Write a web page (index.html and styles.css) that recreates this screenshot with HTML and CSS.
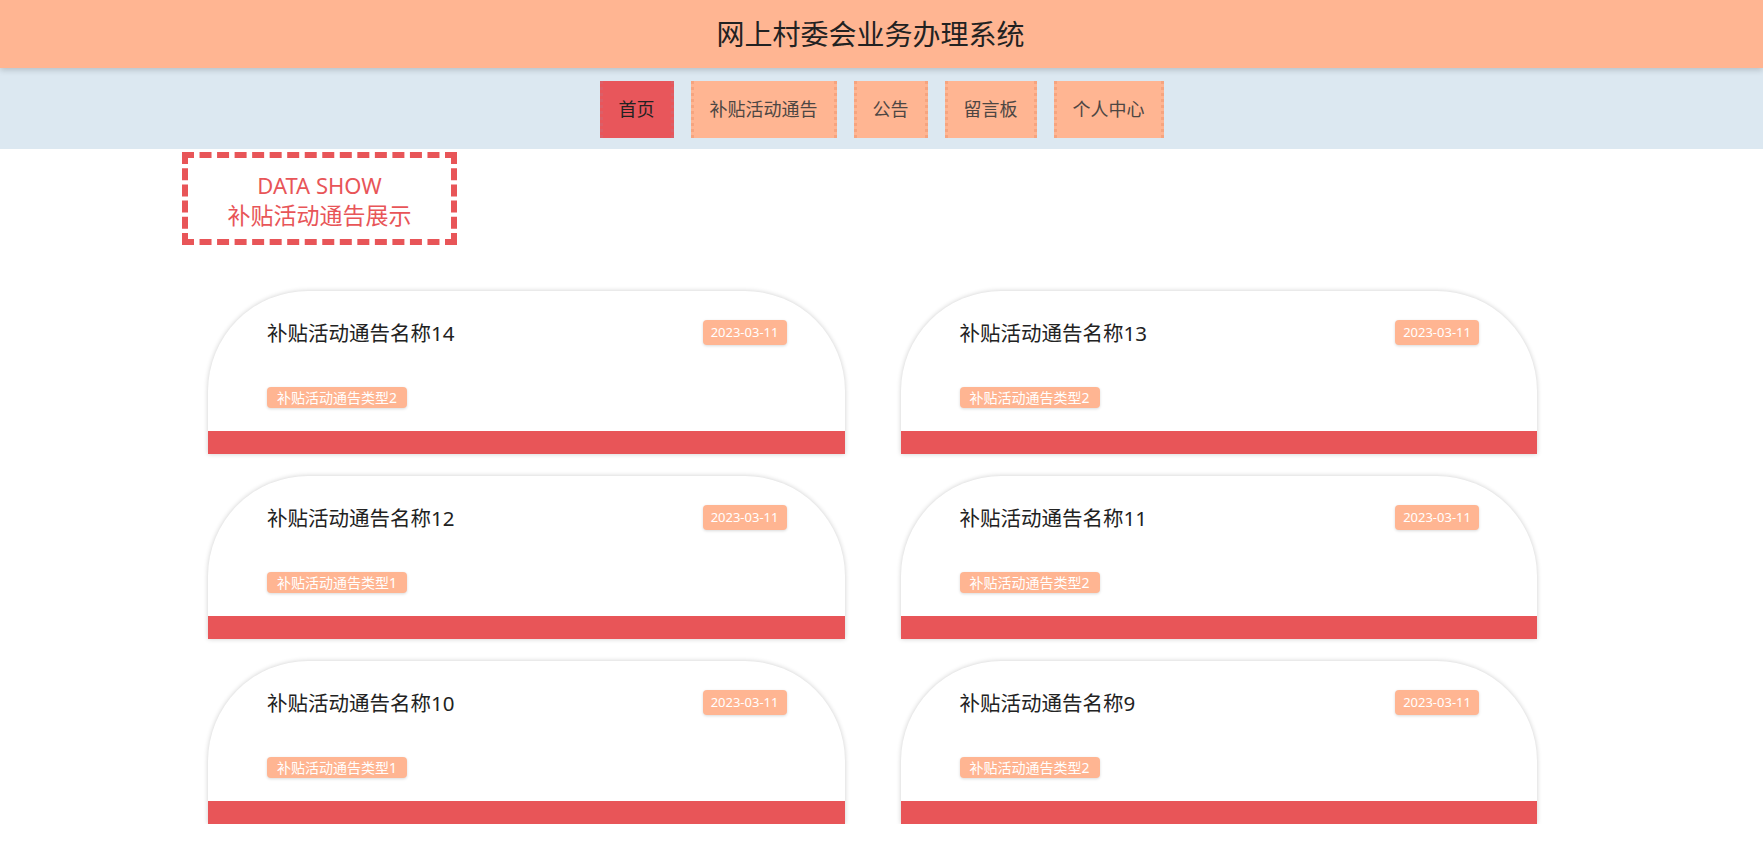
FILE: index.html
```html
<!DOCTYPE html>
<html lang="zh-CN">
<head>
    <meta charset="UTF-8">
    <meta name="viewport" content="width=device-width, initial-scale=1.0">
    <title>网上村委会业务办理系统</title>
    <link rel="stylesheet" href="styles.css">
</head>
<body>
    <header class="top">
        <h1 class="site-title">网上村委会业务办理系统</h1>
    </header>
    <nav class="menu">
        <a class="menu-item active" href="#">首页</a>
        <a class="menu-item" href="#">补贴活动通告</a>
        <a class="menu-item" href="#">公告</a>
        <a class="menu-item" href="#">留言板</a>
        <a class="menu-item" href="#">个人中心</a>
    </nav>
    <div class="page">
        <main class="main">
            <div class="section-title">
                <div class="en">DATA SHOW</div>
                <div class="cn">补贴活动通告展示</div>
            </div>
            <div class="list">
                <div class="card">
                    <div class="card-body">
                        <div class="card-head">
                            <span class="card-name">补贴活动通告名称14</span>
                            <span class="card-date">2023-03-11</span>
                        </div>
                        <span class="card-type">补贴活动通告类型2</span>
                    </div>
                    <div class="card-bar"></div>
                </div>
                <div class="card">
                    <div class="card-body">
                        <div class="card-head">
                            <span class="card-name">补贴活动通告名称13</span>
                            <span class="card-date">2023-03-11</span>
                        </div>
                        <span class="card-type">补贴活动通告类型2</span>
                    </div>
                    <div class="card-bar"></div>
                </div>
                <div class="card">
                    <div class="card-body">
                        <div class="card-head">
                            <span class="card-name">补贴活动通告名称12</span>
                            <span class="card-date">2023-03-11</span>
                        </div>
                        <span class="card-type">补贴活动通告类型1</span>
                    </div>
                    <div class="card-bar"></div>
                </div>
                <div class="card">
                    <div class="card-body">
                        <div class="card-head">
                            <span class="card-name">补贴活动通告名称11</span>
                            <span class="card-date">2023-03-11</span>
                        </div>
                        <span class="card-type">补贴活动通告类型2</span>
                    </div>
                    <div class="card-bar"></div>
                </div>
                <div class="card">
                    <div class="card-body">
                        <div class="card-head">
                            <span class="card-name">补贴活动通告名称10</span>
                            <span class="card-date">2023-03-11</span>
                        </div>
                        <span class="card-type">补贴活动通告类型1</span>
                    </div>
                    <div class="card-bar"></div>
                </div>
                <div class="card">
                    <div class="card-body">
                        <div class="card-head">
                            <span class="card-name">补贴活动通告名称9</span>
                            <span class="card-date">2023-03-11</span>
                        </div>
                        <span class="card-type">补贴活动通告类型2</span>
                    </div>
                    <div class="card-bar"></div>
                </div>
            </div>
        </main>
    </div>
</body>
</html>
```

FILE: styles.css
```css
body, html {
    margin: 0;
    padding: 0;
    background: #fff;
    font-family: "Noto Sans", "Noto Sans CJK SC", sans-serif;
    overflow: hidden;
}
.top {
    position: relative;
    z-index: 2;
    height: 68px;
    background: #ffb592;
    box-shadow: 0 2px 6px rgba(0, 0, 0, 0.18);
    display: flex;
    justify-content: center;
    align-items: center;
}
.site-title {
    margin: 0;
    padding-right: 22px;
    font-size: 28px;
    font-weight: normal;
    color: #222;
    line-height: 1;
}
.menu {
    display: flex;
    justify-content: center;
    gap: 17px;
    padding: 13px 0 11px;
    background: #dce8f1;
}
.menu-item {
    height: 57px;
    line-height: 57px;
    padding: 0 16px;
    font-size: 18px;
    color: #4d4643;
    text-decoration: none;
    background: #ffb592;
    border-left: 3px dotted #f6a47f;
    border-right: 3px dotted #f6a47f;
}
.menu-item.active {
    background: #e8565b;
    color: #222;
    border-color: #dc5f68;
}
.page {
    padding-right: 19px;
}
.main {
    width: 1380px;
    margin: 0 auto;
    padding-top: 3px;
}
.section-title {
    box-sizing: border-box;
    width: 275px;
    height: 93px;
    padding-top: 12px;
    border: 6px dashed #e85558;
    color: #e85558;
    text-align: center;
    line-height: 30px;
}
.section-title .en {
    font-size: 22px;
}
.section-title .cn {
    font-size: 23px;
}
.list {
    display: grid;
    grid-template-columns: 1fr 1fr;
    column-gap: 56px;
    row-gap: 22px;
    padding: 46px 25px 0 26px;
}
.card {
    height: 163px;
    display: flex;
    flex-direction: column;
    background: #fff;
    border-radius: 100px 100px 0 0;
    box-shadow: 0 0 5px rgba(0, 0, 0, 0.2);
    overflow: hidden;
}
.card-body {
    flex: 1;
    padding: 27px 58px 0 59px;
}
.card-head {
    display: flex;
    justify-content: space-between;
    align-items: center;
    height: 28px;
}
.card-name {
    font-size: 20.5px;
    color: #222;
}
.card-date {
    height: 25px;
    line-height: 25px;
    padding: 0 8px;
    font-size: 13px;
    color: #fff;
    background: #ffb592;
    border-radius: 4px;
    box-shadow: 0 1px 3px rgba(0, 0, 0, 0.15);
}
.card-type {
    display: inline-block;
    margin-top: 41px;
    height: 21px;
    line-height: 21px;
    padding: 0 10px;
    font-size: 14px;
    color: #fff;
    background: #ffb592;
    border-radius: 4px;
    box-shadow: 0 1px 3px rgba(0, 0, 0, 0.15);
}
.card-bar {
    height: 23px;
    background: #e85558;
}
```
